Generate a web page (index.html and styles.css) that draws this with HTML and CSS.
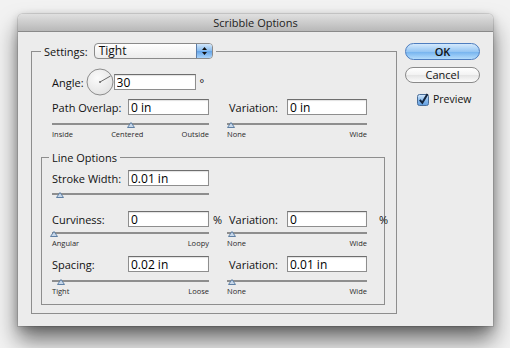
FILE: index.html
```html
<!DOCTYPE html>
<html lang="en">
<head>
  <meta charset="UTF-8">
  <title>Scribble Options</title>
  <link rel="stylesheet" href="styles.css">
</head>
<body>
  <div class="window">
    <div class="titlebar">Scribble Options</div>
    <div class="dialog">
      <fieldset class="group settings">
        <legend>
          <span>Settings:</span>
          <span class="popup">
            <span class="value">Tight</span>
            <span class="stepper">
              <svg width="7" height="10" viewBox="0 0 7 10"><path d="M3.5 1 L6 4 H1 Z M1 6 H6 L3.5 9 Z" fill="#111"/></svg>
            </span>
          </span>
        </legend>
        <div class="pad">
          <div class="angle-row">
            <span>Angle:</span>
            <svg class="dial" width="28" height="28" viewBox="0 0 28 28">
              <defs>
                <radialGradient id="dialFill" cx="40%" cy="35%" r="70%">
                  <stop offset="0" stop-color="#fbfbfb"/>
                  <stop offset="1" stop-color="#e2e2e2"/>
                </radialGradient>
              </defs>
              <circle cx="14" cy="14" r="13" fill="url(#dialFill)" stroke="#8c8c8c"/>
              <line x1="14" y1="14" x2="24.5" y2="8" stroke="#6a6a6a" stroke-width="1"/>
              <circle cx="14" cy="14" r="1" fill="#6a6a6a"/>
            </svg>
            <input class="field" value="30">
            <span class="unit">°</span>
          </div>
          <div class="row overlap">
            <span>Path Overlap:</span>
            <input class="field" value="0 in">
            <span></span>
            <span class="side">Variation:</span>
            <input class="field" value="0 in">
          </div>
          <div class="scale-row first">
            <div class="scale">
              <div class="track"><svg class="thumb" style="left: 50%" viewBox="0 0 8 6"><path d="M4 0.5 L7.5 5.5 H0.5 Z" fill="#c8d8ea" stroke="#5f80a5"/></svg></div>
              <div class="ticks"><span>Inside</span><span>Centered</span><span>Outside</span></div>
            </div>
            <div class="scale alt">
              <div class="track"><svg class="thumb" style="left: 3%" viewBox="0 0 8 6"><path d="M4 0.5 L7.5 5.5 H0.5 Z" fill="#c8d8ea" stroke="#5f80a5"/></svg></div>
              <div class="ticks"><span>None</span><span>Wide</span></div>
            </div>
          </div>
        </div>

        <fieldset class="group lines">
          <legend>Line Options</legend>
          <div class="pad">
            <div class="row stroke">
              <span>Stroke Width:</span>
              <input class="field" value="0.01 in">
            </div>
            <div class="scale-row bare">
              <div class="scale">
                <div class="track"><svg class="thumb" style="left: 5%" viewBox="0 0 8 6"><path d="M4 0.5 L7.5 5.5 H0.5 Z" fill="#c8d8ea" stroke="#5f80a5"/></svg></div>
              </div>
            </div>
            <div class="row curve">
              <span>Curviness:</span>
              <input class="field" value="0">
              <span class="unit">%</span>
              <span class="side">Variation:</span>
              <input class="field" value="0">
              <span class="unit far">%</span>
            </div>
            <div class="scale-row">
              <div class="scale">
                <div class="track"><svg class="thumb" style="left: 1%" viewBox="0 0 8 6"><path d="M4 0.5 L7.5 5.5 H0.5 Z" fill="#c8d8ea" stroke="#5f80a5"/></svg></div>
                <div class="ticks"><span>Angular</span><span>Loopy</span></div>
              </div>
              <div class="scale alt">
                <div class="track"><svg class="thumb" style="left: 3.5%" viewBox="0 0 8 6"><path d="M4 0.5 L7.5 5.5 H0.5 Z" fill="#c8d8ea" stroke="#5f80a5"/></svg></div>
                <div class="ticks"><span>None</span><span>Wide</span></div>
              </div>
            </div>
            <div class="row spacing">
              <span>Spacing:</span>
              <input class="field" value="0.02 in">
              <span></span>
              <span class="side">Variation:</span>
              <input class="field" value="0.01 in">
            </div>
            <div class="scale-row last">
              <div class="scale">
                <div class="track"><svg class="thumb" style="left: 6%" viewBox="0 0 8 6"><path d="M4 0.5 L7.5 5.5 H0.5 Z" fill="#c8d8ea" stroke="#5f80a5"/></svg></div>
                <div class="ticks"><span>Tight</span><span>Loose</span></div>
              </div>
              <div class="scale alt">
                <div class="track"><svg class="thumb" style="left: 3.5%" viewBox="0 0 8 6"><path d="M4 0.5 L7.5 5.5 H0.5 Z" fill="#c8d8ea" stroke="#5f80a5"/></svg></div>
                <div class="ticks"><span>None</span><span>Wide</span></div>
              </div>
            </div>
          </div>
        </fieldset>
      </fieldset>

      <div class="buttons">
        <button class="btn ok">OK</button>
        <button class="btn cancel">Cancel</button>
        <label class="check">
          <svg width="13" height="13" viewBox="0 0 13 13">
            <defs>
              <linearGradient id="boxFill" x1="0" y1="0" x2="0" y2="1">
                <stop offset="0" stop-color="#d9ebfc"/>
                <stop offset="0.5" stop-color="#8dbdee"/>
                <stop offset="1" stop-color="#5f9de0"/>
              </linearGradient>
            </defs>
            <rect x="0.5" y="1.5" width="11" height="11" rx="2" fill="url(#boxFill)" stroke="#4a6d98"/>
            <path d="M2.8 6.8 L5.3 9.8 L10.5 1" fill="none" stroke="#14253d" stroke-width="2"/>
          </svg>
          <span>Preview</span>
        </label>
      </div>
    </div>
  </div>
</body>
</html>
```

FILE: styles.css
```css
* {
  box-sizing: border-box;
}
body {
  margin: 0;
  padding: 14px 17px 0 18px;
  height: 348px;
  overflow: hidden;
  background: #f2f2f2;
  font-family: "Open Sans", sans-serif;
  font-size: 11px;
  color: #111;
}
.window {
  width: 475px;
  height: 312px;
  background: #ececec;
  border-radius: 5px 5px 0 0;
  box-shadow: 0 0 0 1px rgba(0, 0, 0, 0.1), 0 2px 8px rgba(0, 0, 0, 0.2), 0 14px 22px rgba(0, 0, 0, 0.55);
}
.titlebar {
  height: 18px;
  border-bottom: 1px solid #8a8a8a;
  border-radius: 5px 5px 0 0;
  background: linear-gradient(#e0e0e0, #b8b8b8);
  text-align: center;
  line-height: 17px;
  color: #222;
}
.dialog {
  display: flex;
  gap: 8px;
  padding: 11px 13px 0;
}

/* group boxes */
.group {
  margin: 0;
  padding: 0;
  min-width: 0;
  border: 1px solid #8e8e8e;
}
.group > legend {
  padding: 0 3px;
}
.settings {
  width: 366px;
  padding-bottom: 8px;
}
.settings > legend {
  margin-left: 9px;
  display: flex;
  align-items: center;
  gap: 6px;
}
.settings > .pad {
  padding-left: 20px;
}
.lines {
  margin: 11px 11px 0 9px;
  padding-bottom: 8px;
}
.lines > legend {
  margin-left: 7px;
  line-height: 15px;
}
.lines > .pad {
  padding-left: 10px;
}

/* popup menu */
.popup {
  display: flex;
  width: 119px;
  height: 16px;
  border: 1px solid #8a8a8a;
  border-radius: 4px;
  overflow: hidden;
  background: linear-gradient(#ffffff, #ececec);
  font-size: 12px;
  line-height: 14px;
}
.popup .value {
  flex: 1;
  padding-left: 4px;
}
.popup .stepper {
  width: 16px;
  display: flex;
  align-items: center;
  justify-content: center;
  border-left: 1px solid #5b7ca8;
  background: linear-gradient(#d2e7fb, #86baee 50%, #62a2e6 51%, #a9d3fa);
}

/* fields */
.field {
  width: 100%;
  height: 16px;
  margin: 0;
  padding: 0 2px;
  border: 1px solid #8e8e8e;
  border-top-color: #6e6e6e;
  background: #fff;
  box-shadow: inset 0 1px 1px rgba(0, 0, 0, 0.12);
  font: 12px "Open Sans", sans-serif;
  color: #000;
}
.angle-row {
  display: flex;
  align-items: center;
  height: 28px;
  margin-top: 9px;
}
.angle-row .dial {
  margin-left: 2px;
}
.angle-row .field {
  width: 82px;
}
.angle-row .unit {
  margin-left: 4px;
}
.row,
.scale-row {
  display: grid;
  grid-template-columns: 76px 81px 18px 60px 80px 1fr;
  align-items: center;
}
.row {
  height: 16px;
}
.row .unit {
  padding-left: 4px;
}
.row .unit.far {
  padding-left: 12px;
}
.row .side {
  padding-left: 2px;
}
.overlap { margin-top: 3px; }
.stroke { margin-top: 5px; }
.curve { margin-top: 16px; }
.spacing { margin-top: 8px; }

/* sliders */
.scale-row { align-items: start; margin-top: 5px; }
.scale-row.first { margin-top: 8px; }
.scale-row.bare { margin-top: 7px; }
.scale-row.last { margin-top: 8px; }
.scale {
  grid-column: 1 / span 2;
}
.scale.alt {
  grid-column: 4 / span 2;
}
.track {
  position: relative;
  height: 2px;
  background: #8e8e8e;
}
.thumb {
  position: absolute;
  top: -1px;
  width: 8px;
  height: 6px;
  margin-left: -4px;
}
.ticks {
  display: flex;
  justify-content: space-between;
  margin-top: 5px;
  font-size: 7.5px;
  line-height: 9px;
  color: #2a2a2a;
}

/* buttons */
.buttons {
  width: 75px;
  display: flex;
  flex-direction: column;
}
.btn {
  height: 17px;
  padding: 0;
  border-radius: 9px;
  font: 11px "Open Sans", sans-serif;
  line-height: 14px;
  color: #111;
}
.btn.ok {
  border: 1px solid #4d7dbf;
  background: linear-gradient(#d4e9fc, #96c6f3 50%, #72b1ee 51%, #b4dcfc);
  font-weight: 600;
}
.btn.cancel {
  height: 16px;
  margin-top: 7px;
  border: 1px solid #8a8a8a;
  background: linear-gradient(#ffffff, #f2f2f2 50%, #e4e4e4 51%, #fbfbfb);
}
.check {
  display: flex;
  align-items: center;
  gap: 3px;
  margin: 9px 0 0 12px;
  font-size: 10.5px;
}
```
